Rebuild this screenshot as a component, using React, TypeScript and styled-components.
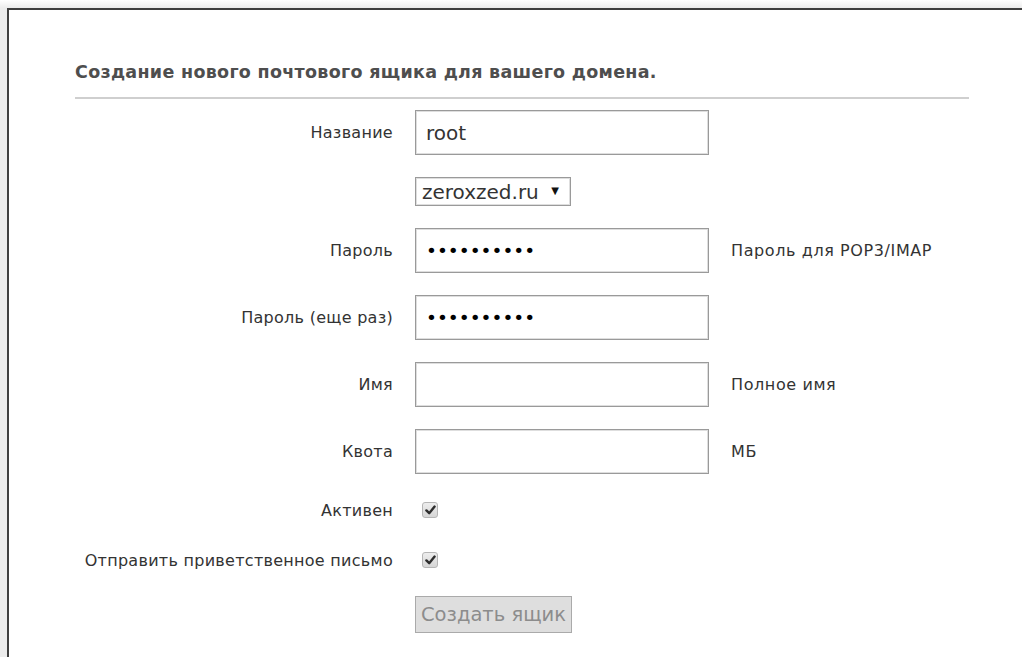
import React from "react";
import styled, { createGlobalStyle } from "styled-components";

const GlobalStyle = createGlobalStyle`
  html, body {
    margin: 0;
    padding: 0;
    height: 100%;
  }
  body {
    background: linear-gradient(#ffffff, #ececec 8px);
    font-family: "DejaVu Sans", Verdana, sans-serif;
    overflow: hidden;
  }
  #root {
    height: 100%;
  }
`;

const Page = styled.div`
  height: 100%;
  box-sizing: border-box;
  padding: 8px 0 0 7px;
  display: flex;
`;

const Panel = styled.main`
  flex: 1;
  background: #fff;
  border-top: 2px solid #3f3f3f;
  border-left: 2px solid #3f3f3f;
  padding: 51px 53px 0 66px;
`;

const Heading = styled.h2`
  margin: 0;
  font-size: 17.5px;
  letter-spacing: 0.3px;
  line-height: 22px;
  font-weight: bold;
  color: #4e4e4e;
  padding-bottom: 14px;
  border-bottom: 2px solid #cfcfcf;
`;

const Form = styled.form`
  display: grid;
  grid-template-columns: 318px 294px auto;
  column-gap: 22px;
  row-gap: 22px;
  margin-top: 11px;
  align-items: center;
`;

const Label = styled.label`
  grid-column: 1;
  justify-self: end;
  font-size: 16px;
  letter-spacing: 0.28px;
  color: #333;
  white-space: nowrap;
`;

const Hint = styled.span`
  grid-column: 3;
  font-size: 16px;
  letter-spacing: 0.6px;
  color: #333;
  white-space: nowrap;
`;

const TextInput = styled.input<{ $secret?: boolean }>`
  grid-column: 2;
  box-sizing: border-box;
  width: 294px;
  height: 45px;
  margin: 0;
  padding: 0 10px;
  border: 1px solid #9a9a9a;
  box-shadow: inset 0 0 0 1px #dedede;
  font-family: "DejaVu Sans", Verdana, sans-serif;
  font-size: ${(p) => (p.$secret ? "18.5px" : "20px")};
  color: ${(p) => (p.$secret ? "#000" : "#333")};
  outline: none;
  background: #fff;
`;

const SelectWrap = styled.div`
  grid-column: 2;
  position: relative;
  justify-self: start;
  display: flex;
`;

const Select = styled.select`
  appearance: none;
  -webkit-appearance: none;
  box-sizing: border-box;
  width: 156px;
  height: 29px;
  margin: 0;
  padding: 0 0 0 6px;
  border: 1px solid #9a9a9a;
  box-shadow: inset 0 0 0 1px #dedede;
  border-radius: 0;
  background: #fff;
  font-family: "DejaVu Sans", Verdana, sans-serif;
  font-size: 20px;
  color: #333;
  outline: none;
`;

const Arrow = styled.span`
  position: absolute;
  right: 12px;
  top: 8px;
  font-size: 10px;
  color: #111;
  pointer-events: none;
`;

const CheckRow = styled.div`
  grid-column: 2;
  height: 28px;
  display: flex;
  align-items: center;
  padding-left: 7px;
`;

const Check = styled.span`
  box-sizing: border-box;
  width: 16px;
  height: 16px;
  border: 1px solid #b5b5b5;
  border-radius: 3px;
  background: linear-gradient(#ededed, #d6d6d6);
  display: flex;
  align-items: center;
  justify-content: center;
`;

const Submit = styled.button`
  grid-column: 2;
  justify-self: start;
  box-sizing: border-box;
  height: 37px;
  padding: 0 5px;
  border: 1px solid #aaa;
  background: #dedede;
  font-family: "DejaVu Sans", Verdana, sans-serif;
  font-size: 19.5px;
  color: #8c8c8c;
`;

const Tick = () => (
  <svg width="11" height="10" viewBox="0 0 11 10">
    <path d="M1.4 5.4 L4.2 8.2 L9.6 1.6" fill="none" stroke="#2e2e2e" strokeWidth="2.4" strokeLinecap="round" strokeLinejoin="round" />
  </svg>
);

type FieldProps = { label?: string; hint?: string; children: React.ReactNode };

const Field = ({ label, hint, children }: FieldProps) => (
  <>
    {label ? <Label>{label}</Label> : null}
    {children}
    {hint ? <Hint>{hint}</Hint> : null}
  </>
);

export default function App() {
  return (
    <>
      <GlobalStyle />
      <Page>
        <Panel>
          <Heading>Создание нового почтового ящика для вашего домена.</Heading>
          <Form onSubmit={(e) => e.preventDefault()}>
            <Field label="Название">
              <TextInput defaultValue="root" />
            </Field>
            <Field>
              <SelectWrap>
                <Select defaultValue="zeroxzed.ru">
                  <option>zeroxzed.ru</option>
                </Select>
                <Arrow>▼</Arrow>
              </SelectWrap>
            </Field>
            <Field label="Пароль" hint="Пароль для POP3/IMAP">
              <TextInput $secret type="password" defaultValue="qwerty1234" />
            </Field>
            <Field label="Пароль (еще раз)">
              <TextInput $secret type="password" defaultValue="qwerty1234" />
            </Field>
            <Field label="Имя" hint="Полное имя">
              <TextInput />
            </Field>
            <Field label="Квота" hint="МБ">
              <TextInput />
            </Field>
            <Field label="Активен">
              <CheckRow>
                <Check><Tick /></Check>
              </CheckRow>
            </Field>
            <Field label="Отправить приветственное письмо">
              <CheckRow>
                <Check><Tick /></Check>
              </CheckRow>
            </Field>
            <Field>
              <Submit type="submit" disabled>Создать ящик</Submit>
            </Field>
          </Form>
        </Panel>
      </Page>
    </>
  );
}
